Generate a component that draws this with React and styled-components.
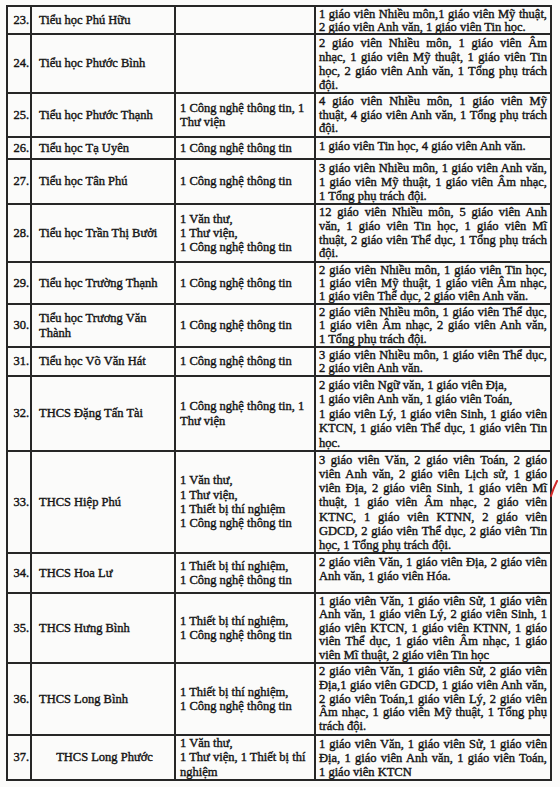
import React from 'react';
import styled, { createGlobalStyle } from 'styled-components';

const GlobalStyle = createGlobalStyle`
  html, body {
    margin: 0;
    padding: 0;
    background: #fbfbfa;
  }
  body {
    font-family: "Liberation Serif", "Times New Roman", serif;
    color: #151515;
  }
`;

const Page = styled.div`
  position: relative;
  width: 560px;
  height: 787px;
  padding: 5px 0 0 6px;
  box-sizing: border-box;
  overflow: hidden;
`;

const Table = styled.div`
  display: flex;
  flex-direction: column;
  width: 546px;
  border-top: 2px solid #262626;
  border-left: 2px solid #262626;
  box-sizing: border-box;
`;

const Row = styled.div`
  display: grid;
  grid-template-columns: 24px 144px 140px 236px;
  height: ${(p) => p.$h}px;
`;

const Cell = styled.div`
  display: flex;
  flex-direction: column;
  justify-content: ${(p) => (p.$top ? 'flex-start' : 'center')};
  border-right: 2px solid #262626;
  border-bottom: 2px solid #262626;
  box-sizing: border-box;
  overflow: hidden;
  font-size: 12.5px;
  line-height: 14.3px;
  -webkit-text-stroke: 0.4px #151515;
`;

const NumCell = styled(Cell)`
  align-items: flex-end;
  padding-right: 1px;
`;

const NameCell = styled(Cell)`
  padding: 0 4px 0 7px;
  text-align: ${(p) => (p.$center ? 'center' : 'left')};
`;

const StaffCell = styled(Cell)`
  padding: 0 2px 0 4px;
  white-space: nowrap;
`;

const TeachCell = styled(Cell)`
  padding: 1px 3px 0 3px;
  line-height: ${(p) => p.$lh}px;
`;

const Line = styled.div`
  text-align: justify;
  text-align-last: ${(p) => (p.$flush ? 'left' : 'justify')};
  white-space: nowrap;
`;

const PenMark = styled.svg`
  position: absolute;
  left: 549px;
  top: 480px;
`;

const rows = [
  {
    no: '23.',
    name: ['Tiểu học Phú Hữu'],
    staff: [],
    teach: ['1 giáo viên Nhiều môn,1 giáo viên Mỹ thuật,', '2 giáo viên Anh văn, 1 giáo viên Tin học.'],
    h: 28,
  },
  {
    no: '24.',
    name: ['Tiểu học Phước Bình'],
    staff: [],
    teach: [
      '2 giáo viên Nhiều môn, 1 giáo viên Âm',
      'nhạc, 1 giáo viên Mỹ thuật, 1 giáo viên Tin',
      'học, 2 giáo viên Anh văn, 1 Tổng phụ trách',
      'đội.',
    ],
    h: 59,
  },
  {
    no: '25.',
    name: ['Tiểu học Phước Thạnh'],
    staff: ['1 Công nghệ thông tin, 1', 'Thư viện'],
    teach: ['4 giáo viên Nhiều môn, 1 giáo viên Mỹ', 'thuật, 4 giáo viên Anh văn, 1 Tổng phụ trách', 'đội.'],
    h: 44,
  },
  {
    no: '26.',
    name: ['Tiểu học Tạ Uyên'],
    staff: ['1 Công nghệ thông tin'],
    teach: ['1 giáo viên Tin học, 4 giáo viên Anh văn.'],
    h: 22,
  },
  {
    no: '27.',
    name: ['Tiểu học Tân Phú'],
    staff: ['1 Công nghệ thông tin'],
    teach: [
      '3 giáo viên Nhiều môn, 1 giáo viên Anh văn,',
      '1 giáo viên Mỹ thuật, 1 giáo viên Âm nhạc,',
      '1 Tổng phụ trách đội.',
    ],
    h: 45,
  },
  {
    no: '28.',
    name: ['Tiểu học Trần Thị Bưởi'],
    staff: ['1 Văn thư,', '1 Thư viện,', '1 Công nghệ thông tin'],
    teach: [
      '12 giáo viên Nhiều môn, 5 giáo viên Anh',
      'văn, 1 giáo viên Tin học, 1 giáo viên Mĩ',
      'thuật, 2 giáo viên Thể dục, 1 Tổng phụ trách',
      'đội.',
    ],
    h: 58,
  },
  {
    no: '29.',
    name: ['Tiểu học Trường Thạnh'],
    staff: ['1 Công nghệ thông tin'],
    teach: [
      '2 giáo viên Nhiều môn, 1 giáo viên Tin học,',
      '1 giáo viên Mỹ thuật, 1 giáo viên Âm nhạc,',
      '1 giáo viên Thể dục, 2 giáo viên Anh văn.',
    ],
    h: 42,
  },
  {
    no: '30.',
    name: ['Tiểu học Trương Văn', 'Thành'],
    staff: ['1 Công nghệ thông tin'],
    teach: [
      '2 giáo viên Nhiều môn, 1 giáo viên Thể dục,',
      '1 giáo viên Âm nhạc,  2 giáo viên Anh văn,',
      '1 Tổng phụ trách đội.',
    ],
    h: 43,
  },
  {
    no: '31.',
    name: ['Tiểu học Võ Văn Hát'],
    staff: ['1 Công nghệ thông tin'],
    teach: ['3 giáo viên Nhiều môn, 1 giáo viên Thể dục,', '2 giáo viên Anh văn.'],
    h: 29,
  },
  {
    no: '32.',
    name: ['THCS Đặng Tấn Tài'],
    staff: ['1 Công nghệ thông tin, 1', 'Thư viện'],
    teach: [
      '2 giáo viên Ngữ văn, 1 giáo viên Địa,',
      '1 giáo viên Anh văn, 1 giáo viên Toán,',
      '1 giáo viên Lý, 1 giáo viên Sinh, 1 giáo viên',
      'KTCN, 1 giáo viên Thể dục, 1 giáo viên Tin',
      'học.',
    ],
    flush: [0, 1],
    h: 75,
  },
  {
    no: '33.',
    name: ['THCS Hiệp Phú'],
    staff: ['1 Văn thư,', '1 Thư viện,', '1 Thiết bị thí nghiệm', '1 Công nghệ thông tin'],
    teach: [
      '3 giáo viên Văn, 2 giáo viên Toán, 2 giáo',
      'viên Anh văn, 2 giáo viên Lịch sử, 1 giáo',
      'viên Địa,  2 giáo viên Sinh, 1 giáo viên Mĩ',
      'thuật, 1 giáo viên Âm nhạc, 2 giáo viên',
      'KTNC, 1 giáo viên KTNN, 2 giáo viên',
      'GDCD, 2 giáo viên Thể dục, 2 giáo viên Tin',
      'học, 1 Tổng phụ trách đội.',
    ],
    h: 102,
  },
  {
    no: '34.',
    name: ['THCS Hoa Lư'],
    staff: ['1 Thiết bị thí nghiệm,', '1 Công nghệ thông tin'],
    teach: ['2 giáo viên Văn, 1 giáo viên Địa, 2 giáo viên', 'Anh văn, 1 giáo viên Hóa.'],
    h: 40,
  },
  {
    no: '35.',
    name: ['THCS Hưng Bình'],
    staff: ['1 Thiết bị thí nghiệm,', '1 Công nghệ thông tin'],
    teach: [
      '1 giáo viên Văn, 1 giáo viên Sử, 1 giáo viên',
      'Anh văn, 1 giáo viên Lý, 2 giáo viên Sinh, 1',
      'giáo viên KTCN, 1 giáo viên KTNN, 1 giáo',
      'viên Thể dục, 1 giáo viên Âm nhạc, 1 giáo',
      'viên Mĩ thuật, 2 giáo viên Tin học',
    ],
    h: 70,
  },
  {
    no: '36.',
    name: ['THCS Long Bình'],
    staff: ['1 Thiết bị thí nghiệm,', '1 Công nghệ thông tin'],
    teach: [
      '2 giáo viên Văn, 1 giáo viên Sử, 2 giáo viên',
      'Địa,1 giáo viên GDCD, 1 giáo viên Anh văn,',
      '2 giáo viên Toán,1 giáo viên Lý, 2 giáo viên',
      'Âm nhạc, 1 giáo viên Mỹ thuật, 1 Tổng phụ',
      'trách đội.',
    ],
    h: 72,
  },
  {
    no: '37.',
    name: ['THCS Long Phước'],
    center: true,
    staff: ['1 Văn thư,', '1 Thư viện, 1 Thiết bị thí', 'nghiệm'],
    teach: [
      '1 giáo viên Văn, 1 giáo viên Sử, 1 giáo viên',
      'Địa, 1 giáo viên Anh văn, 1 giáo viên Toán,',
      '1 giáo viên KTCN',
    ],
    h: 45,
  },
];

const App = () => (
  <>
    <GlobalStyle />
    <Page>
      <Table>
        {rows.map((r) => (
          <Row key={r.no} $h={r.h}>
            <NumCell>{r.no}</NumCell>
            <NameCell $center={r.center}>
              {r.name.map((n) => (
                <div key={n}>{n}</div>
              ))}
            </NameCell>
            <StaffCell>
              {r.staff.map((s) => (
                <div key={s}>{s}</div>
              ))}
            </StaffCell>
            <TeachCell $top $lh={Math.min(14.4, (r.h - 3) / r.teach.length)}>
              {r.teach.map((t, i) => (
                <Line key={i} $flush={i === r.teach.length - 1 || (r.flush || []).includes(i)}>
                  {t}
                </Line>
              ))}
            </TeachCell>
          </Row>
        ))}
      </Table>
      <PenMark width="10" height="18" viewBox="0 0 10 18">
        <path d="M8 1 C6 5 4 9 2 16" stroke="#d22a2a" strokeWidth="2" fill="none" strokeLinecap="round" />
      </PenMark>
    </Page>
  </>
);

export default App;
